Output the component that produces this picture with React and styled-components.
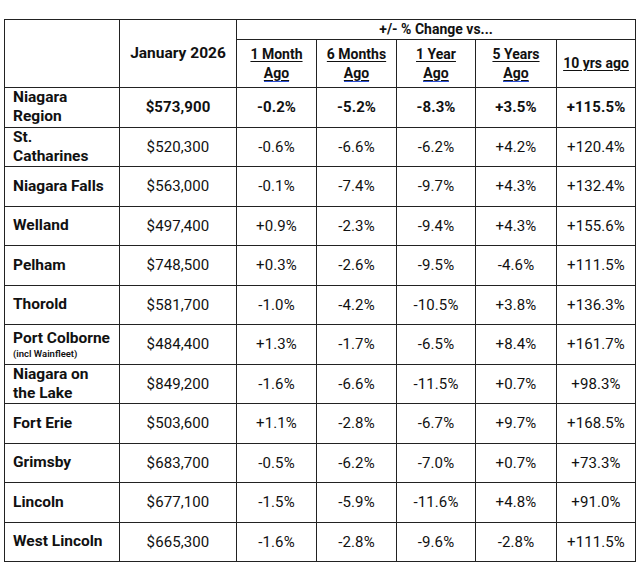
import React from 'react';
import styled, { createGlobalStyle } from 'styled-components';

const GlobalStyle = createGlobalStyle`
  body { margin: 0; background: #fff; font-family: Roboto, "Liberation Sans", sans-serif; color: #111; }
`;

const Page = styled.div`padding: 19px 0 0 4px;`;
const Table = styled.table`
  border-collapse: collapse;
  table-layout: fixed;
  width: 631px;
`;
const Th = styled.th`
  border: 1px solid #222;
  padding: 0;
  font-size: 14px;
  font-weight: 700;
  text-align: center;
  vertical-align: middle;
  line-height: 19px;
  height: ${p => p.h || 'auto'};
`;
const Td = styled.td`
  border: 1px solid #222;
  padding: 0;
  height: 38.5px;
  font-size: 15px;
  font-weight: ${p => (p.bold ? 700 : 400)};
  text-align: center;
  vertical-align: middle;
  letter-spacing: 0.1px;
`;
const Name = styled.td`
  border: 1px solid #222;
  padding: 0 0 0 8px;
  height: 38.5px;
  font-size: 15.5px;
  font-weight: 700;
  line-height: 19px;
  text-align: left;
  vertical-align: middle;
`;
const Small = styled.div`font-size: 9.5px; line-height: 12px; font-weight: 600;`;
const U = styled.span`text-decoration: underline; text-underline-offset: 2px;`;
const Ago = styled.span`
  text-decoration: underline;
  text-underline-offset: 2px;
  border-bottom: 1.5px solid #2a4fd6;
`;

const rows = [
  ['Niagara Region', null, '$573,900', '-0.2%', '-5.2%', '-8.3%', '+3.5%', '+115.5%', true],
  ['St. Catharines', null, '$520,300', '-0.6%', '-6.6%', '-6.2%', '+4.2%', '+120.4%'],
  ['Niagara Falls', null, '$563,000', '-0.1%', '-7.4%', '-9.7%', '+4.3%', '+132.4%'],
  ['Welland', null, '$497,400', '+0.9%', '-2.3%', '-9.4%', '+4.3%', '+155.6%'],
  ['Pelham', null, '$748,500', '+0.3%', '-2.6%', '-9.5%', '-4.6%', '+111.5%'],
  ['Thorold', null, '$581,700', '-1.0%', '-4.2%', '-10.5%', '+3.8%', '+136.3%'],
  ['Port Colborne', '(incl Wainfleet)', '$484,400', '+1.3%', '-1.7%', '-6.5%', '+8.4%', '+161.7%'],
  ['Niagara on the Lake', null, '$849,200', '-1.6%', '-6.6%', '-11.5%', '+0.7%', '+98.3%'],
  ['Fort Erie', null, '$503,600', '+1.1%', '-2.8%', '-6.7%', '+9.7%', '+168.5%'],
  ['Grimsby', null, '$683,700', '-0.5%', '-6.2%', '-7.0%', '+0.7%', '+73.3%'],
  ['Lincoln', null, '$677,100', '-1.5%', '-5.9%', '-11.6%', '+4.8%', '+91.0%'],
  ['West Lincoln', null, '$665,300', '-1.6%', '-2.8%', '-9.6%', '-2.8%', '+111.5%'],
];

const nameBreaks = {
  'Niagara Region': ['Niagara', 'Region'],
  'St. Catharines': ['St.', 'Catharines'],
  'Niagara on the Lake': ['Niagara on', 'the Lake'],
};

export default function App() {
  return (
    <Page>
      <GlobalStyle />
      <Table>
        <colgroup>
          <col style={{ width: 115 }} />
          <col style={{ width: 117 }} />
          <col style={{ width: 80 }} />
          <col style={{ width: 80 }} />
          <col style={{ width: 79 }} />
          <col style={{ width: 81 }} />
          <col style={{ width: 79 }} />
        </colgroup>
        <thead>
          <tr>
            <Th rowSpan={2} />
            <Th rowSpan={2} style={{ fontSize: 15.5 }}>January 2026</Th>
            <Th colSpan={5} h="17px">+/- % Change vs...</Th>
          </tr>
          <tr>
            <Th h="47px"><U>1 Month</U><br /><Ago>Ago</Ago></Th>
            <Th><U>6 Months</U><br /><Ago>Ago</Ago></Th>
            <Th><U>1 Year</U><br /><Ago>Ago</Ago></Th>
            <Th><U>5 Years</U><br /><Ago>Ago</Ago></Th>
            <Th><U>10 yrs ago</U></Th>
          </tr>
        </thead>
        <tbody>
          {rows.map(([name, sub, price, ...rest]) => {
            const bold = rest[5] === true;
            const vals = rest.slice(0, 5);
            const lines = nameBreaks[name];
            return (
              <tr key={name}>
                <Name>
                  {lines ? (
                    <>{lines[0]}<br />{lines[1]}</>
                  ) : name}
                  {sub && <Small>{sub}</Small>}
                </Name>
                <Td bold={bold}>{price}</Td>
                {vals.map((v, i) => (
                  <Td key={i} bold={bold}>{v}</Td>
                ))}
              </tr>
            );
          })}
        </tbody>
      </Table>
    </Page>
  );
}
